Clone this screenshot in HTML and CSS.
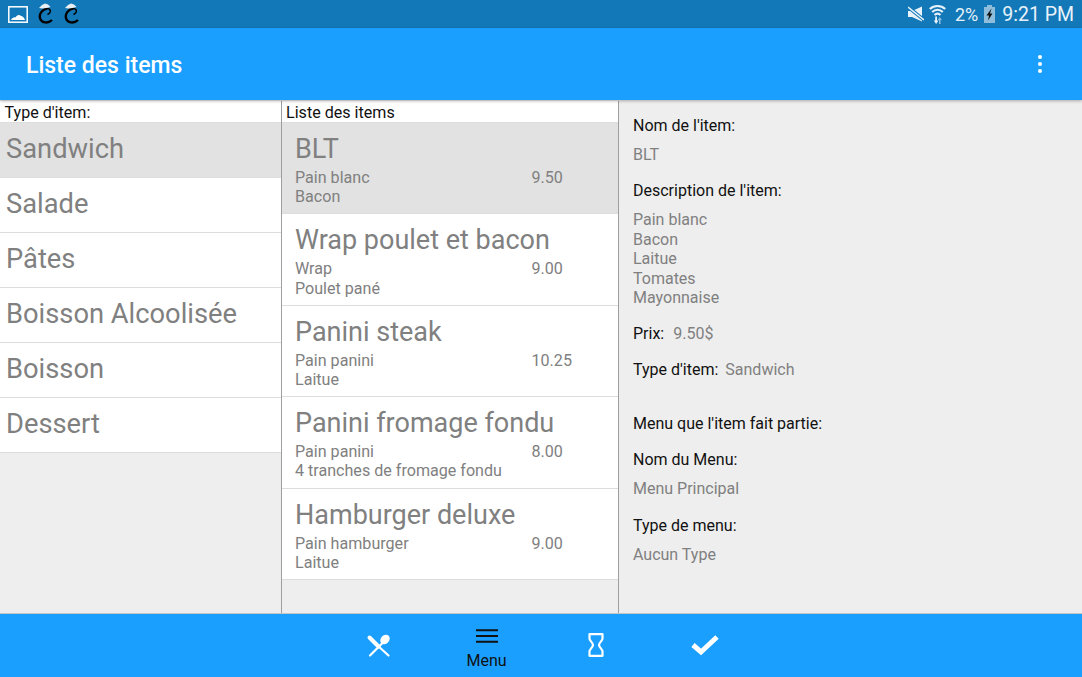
FILE: index.html
```html
<!DOCTYPE html>
<html lang="fr">
<head>
    <meta charset="UTF-8">
    <title>Liste des items</title>
    <link rel="stylesheet" href="styles.css">
</head>
<body>
    <div class="status-bar">
        <div class="status-left">
            <svg class="pic-icon" width="20" height="17" viewBox="0 0 20 17"><rect x="0.800" y="0.800" width="18.400" height="15.400" fill="none" stroke="#fff" stroke-width="1.500"/><path d="M3 14c1-2 3-3 4.500-2.500 1-2.500 4-3.500 5.500-1.500 1.500 0 3.500 2 4 4z" fill="#fff"/></svg>
            <svg class="swirl" width="16" height="22" viewBox="0 0 16 22"><path d="M9 5.500C4 6.500 1 11 2 15c1 5 8 6 12 2" fill="none" stroke="#000" stroke-width="2.400"/><path d="M9 5.500c3 0 4 2 3 4-.5 1-1.500 1.500-2.500 2" fill="none" stroke="#000" stroke-width="1.500"/><path d="M1 5l3-3 3-1.500 3 1 2.500 2.500-4 1-4 .5z" fill="#e8eef2"/></svg>
            <svg class="swirl" width="16" height="22" viewBox="0 0 16 22"><path d="M9 5.500C4 6.500 1 11 2 15c1 5 8 6 12 2" fill="none" stroke="#000" stroke-width="2.400"/><path d="M9 5.500c3 0 4 2 3 4-.5 1-1.500 1.500-2.500 2" fill="none" stroke="#000" stroke-width="1.500"/><path d="M1 5l3-3 3-1.500 3 1 2.500 2.500-4 1-4 .5z" fill="#e8eef2"/></svg>
        </div>
        <div class="status-right">
            <svg width="16" height="16" viewBox="0 0 16 16"><path d="M0 5h4l10-4.500v15L4 11H0z" fill="#e8f2fa"/><path d="M0 1l16 13" stroke="#1378b8" stroke-width="3.500"/><path d="M0 1l16 13" stroke="#e8f2fa" stroke-width="1.500"/></svg>
            <svg class="wifi" width="17" height="20" viewBox="0 0 17 20"><path d="M0.800 5c4.500-4 11-4 15.400 0M3.200 8c3-3 7.600-3 10.600 0M5.500 11c2-1.700 4-1.700 6 0" fill="none" stroke="#e8f2fa" stroke-width="2.200"/><path d="M6.200 12.500h1.800v4h1.500L7.100 20l-2.300-3.500h1.400z" fill="#e8f2fa"/><path d="M10 20v-4H8.800l2-3 2 3h-1.300v4z" fill="#8fc0e0"/></svg>
            <span class="battery-pct">2%</span>
            <svg class="battery" width="11" height="18" viewBox="0 0 11 18"><path d="M3 0h5v2h3v16H0V2h3z" fill="#8fbedd"/><path d="M7.500 3.500L2.500 10.500H5l-1 5 4.500-7H6z" fill="#111"/></svg>
            <span class="clock">9:21 PM</span>
        </div>
    </div>

    <header class="toolbar">
        <h1>Liste des items</h1>
        <div class="overflow-menu"><i></i><i></i><i></i></div>
    </header>

    <main class="content">
        <section class="col-types">
            <div class="col-title">Type d'item:</div>
            <div class="type-row selected">Sandwich</div>
            <div class="type-row">Salade</div>
            <div class="type-row">Pâtes</div>
            <div class="type-row">Boisson Alcoolisée</div>
            <div class="type-row">Boisson</div>
            <div class="type-row">Dessert</div>
        </section>

        <section class="col-items">
            <div class="col-title">Liste des items</div>
            <div class="item-row selected">
                <div class="item-name">BLT</div>
                <div class="item-line"><span>Pain blanc</span><span class="item-price">9.50</span></div>
                <div class="item-line"><span>Bacon</span></div>
            </div>
            <div class="item-row">
                <div class="item-name">Wrap poulet et bacon</div>
                <div class="item-line"><span>Wrap</span><span class="item-price">9.00</span></div>
                <div class="item-line"><span>Poulet pané</span></div>
            </div>
            <div class="item-row">
                <div class="item-name">Panini steak</div>
                <div class="item-line"><span>Pain panini</span><span class="item-price">10.25</span></div>
                <div class="item-line"><span>Laitue</span></div>
            </div>
            <div class="item-row">
                <div class="item-name">Panini fromage fondu</div>
                <div class="item-line"><span>Pain panini</span><span class="item-price">8.00</span></div>
                <div class="item-line"><span>4 tranches de fromage fondu</span></div>
            </div>
            <div class="item-row">
                <div class="item-name">Hamburger deluxe</div>
                <div class="item-line"><span>Pain hamburger</span><span class="item-price">9.00</span></div>
                <div class="item-line"><span>Laitue</span></div>
            </div>
        </section>

        <section class="col-detail">
            <div class="label">Nom de l'item:</div>
            <div class="value value-short">BLT</div>
            <div class="label desc-label">Description de l'item:</div>
            <div class="value desc-value">Pain blanc<br>Bacon<br>Laitue<br>Tomates<br>Mayonnaise</div>
            <div class="pair"><span class="label-inline price-label">Prix:</span><span class="value-inline">9.50$</span></div>
            <div class="pair"><span class="label-inline">Type d'item:</span><span class="value-inline">Sandwich</span></div>
            <div class="label section-label">Menu que l'item fait partie:</div>
            <div class="label">Nom du Menu:</div>
            <div class="value">Menu Principal</div>
            <div class="label">Type de menu:</div>
            <div class="value">Aucun Type</div>
        </section>
    </main>

    <nav class="bottom-bar">
        <div class="tab">
            <svg class="fork-icon" width="26" height="26" viewBox="0 0 26 26"><path d="M4.500 4.500l9 9" fill="none" stroke="#fff" stroke-width="4" stroke-linecap="round"/><path d="M12 12l11.500 10.500M5 22.500l12-12" fill="none" stroke="#fff" stroke-width="2.200" stroke-linecap="round"/><ellipse cx="20" cy="6.500" rx="5.200" ry="4.200" fill="#fff" transform="rotate(-45 20 6.500)"/></svg>
        </div>
        <div class="tab tab-active">
            <svg width="22" height="14" viewBox="0 0 22 14"><path d="M0 1.200h22M0 7h22M0 12.800h22" stroke="#111" stroke-width="2"/></svg>
            <span>Menu</span>
        </div>
        <div class="tab">
            <svg width="16" height="24" viewBox="0 0 16 24"><path d="M1.500 1.200h13v4.500c0 2-3.500 4-3.500 6.300s3.500 4.300 3.500 6.300v4.500h-13v-4.500c0-2 3.500-4 3.500-6.300s-3.500-4.300-3.500-6.300z" fill="none" stroke="#fff" stroke-width="2.200" stroke-linejoin="round"/></svg>
        </div>
        <div class="tab">
            <svg width="30" height="24" viewBox="0 0 30 24"><path d="M3 12l8 7L27 4" fill="none" stroke="#fff" stroke-width="5"/></svg>
        </div>
    </nav>
</body>
</html>
```

FILE: styles.css
```css
* {
    margin: 0;
    padding: 0;
    box-sizing: border-box;
}

html, body {
    height: 100%;
}

body {
    font-family: Roboto, sans-serif;
    display: flex;
    flex-direction: column;
    overflow: hidden;
    background-color: #eeeeee;
    color: #808080;
}

.status-bar {
    height: 28px;
    background-color: #1378b8;
    display: flex;
    justify-content: space-between;
    align-items: center;
    padding: 0 8px;
    flex-shrink: 0;
}

.status-left, .status-right {
    display: flex;
    align-items: center;
}

.status-left {
    gap: 10px;
}

.status-right {
    color: #e8f2fa;
    font-size: 19.500px;
}

.wifi {
    margin-left: 5px;
    margin-top: -1px;
}

.battery-pct {
    font-size: 18px;
    margin-left: 9px;
}

.battery {
    margin-left: 6px;
}

.clock {
    margin-left: 7px;
}

.toolbar {
    height: 72px;
    background-color: #1a9fff;
    display: flex;
    justify-content: space-between;
    align-items: center;
    padding: 3px 40px 0 26px;
    flex-shrink: 0;
    box-shadow: 0 1px 3px rgba(0, 0, 0, 0.3);
    z-index: 2;
}

.toolbar h1 {
    font-size: 23px;
    font-weight: 500;
    color: #fff;
}

.overflow-menu {
    display: flex;
    flex-direction: column;
    gap: 3px;
    margin-top: -4px;
}

.overflow-menu i {
    width: 4px;
    height: 4px;
    border-radius: 50%;
    background-color: #fff;
}

.content {
    flex: 1;
    display: flex;
    min-height: 0;
    padding-top: 1px;
}

.col-types {
    width: 282px;
    border-right: 1px solid #9e9e9e;
}

.col-items {
    width: 337px;
    border-right: 1px solid #9e9e9e;
}

.col-title {
    height: 22px;
    line-height: 23px;
    padding-left: 4px;
    background-color: #fff;
    color: #111;
    font-size: 16.100px;
    border-bottom: 1px solid #ddd;
}

.col-types .col-title {
    padding-left: 4.500px;
}

.type-row {
    height: 55px;
    line-height: 52px;
    padding-left: 6px;
    font-size: 27.300px;
    background-color: #fff;
    border-bottom: 1px solid #ddd;
}

.item-row {
    height: 91.400px;
    padding: 9px 13px 0;
    background-color: #fff;
    border-bottom: 1px solid #ddd;
}

.selected {
    background-color: #e2e2e2;
}

.item-name {
    font-size: 27px;
    line-height: 34px;
    margin-bottom: 2px;
}

.item-line {
    font-size: 16.100px;
    line-height: 19.300px;
    display: flex;
}

.item-line span:first-child {
    width: 236.500px;
}

.col-detail {
    flex: 1;
    padding: 15px 14px;
    font-size: 16px;
}

.label {
    color: #111;
    line-height: 19px;
    margin-bottom: 10px;
}

.value {
    line-height: 19.500px;
    margin-bottom: 17.500px;
}

.value-short {
    margin-bottom: 16px;
}

.desc-label {
    margin-bottom: 10.600px;
}

.desc-value {
    margin-bottom: 16.400px;
}

.pair {
    line-height: 19px;
    margin-bottom: 17px;
}

.label-inline {
    color: #111;
    margin-right: 7px;
}

.price-label {
    margin-right: 9px;
}

.section-label {
    margin-top: 35px;
    margin-bottom: 17px;
}

.bottom-bar {
    height: 64px;
    background-color: #1a9fff;
    border-top: 1px solid #c4c4c4;
    display: flex;
    justify-content: center;
    flex-shrink: 0;
}

.tab {
    width: 109px;
    display: flex;
    flex-direction: column;
    align-items: center;
    justify-content: center;
    padding-bottom: 2px;
}

.fork-icon {
    margin-top: 3px;
}

.tab-active {
    color: #111;
    font-size: 16px;
    gap: 8px;
    padding-top: 7px;
    padding-bottom: 0;
}
```
